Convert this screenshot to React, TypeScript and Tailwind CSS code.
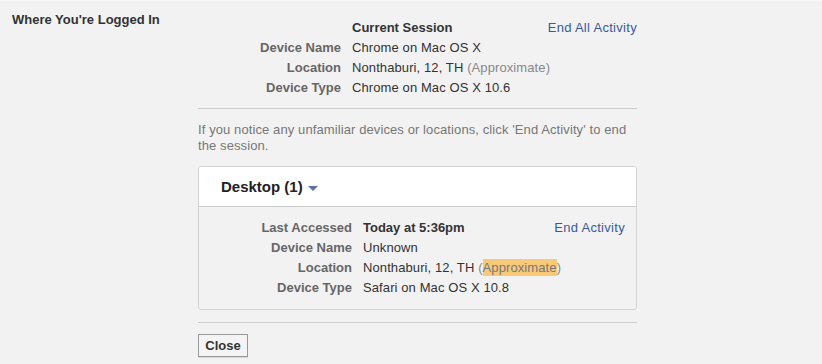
const font = "font-['Helvetica_Neue','Liberation_Sans',Arial,sans-serif]";

type Row = { label: string; value: React.ReactNode };

const Rows = ({ rows, labelW }: { rows: Row[]; labelW: string }) => (
  <div className="flex flex-col">
    {rows.map((r) => (
      <div key={r.label} className="flex h-5 items-center whitespace-nowrap">
        <span className={`${labelW} shrink-0 text-right font-bold tracking-normal text-[#666]`}>{r.label}</span>
        <span className="ml-[11px] text-[#333]">{r.value}</span>
      </div>
    ))}
  </div>
);

export default function App() {
  return (
    <div className={`${font} h-[364px] w-[822px] border-t border-[#f8f8f8] bg-[#f2f2f2] text-[13px] leading-4 tracking-[0.1px] text-[#333]`}>
      <div className="flex">
        <div className="w-[198px] shrink-0 pl-3 pt-[11px] font-bold tracking-normal">Where You're Logged In</div>

        <div className="flex w-[439px] flex-col">
          {/* current session */}
          <div className="flex pt-[17px]">
            <div className="min-w-0 flex-1">
              <div className="flex h-5 items-center">
                <span className="w-[143px] shrink-0" />
                <span className="ml-[11px] font-bold tracking-normal">Current Session</span>
              </div>
              <Rows
                labelW="w-[143px]"
                rows={[
                  { label: "Device Name", value: "Chrome on Mac OS X" },
                  {
                    label: "Location",
                    value: (
                      <>
                        Nonthaburi, 12, TH <span className="text-[#888]">(Approximate)</span>
                      </>
                    ),
                  },
                  { label: "Device Type", value: "Chrome on Mac OS X 10.6" },
                ]}
              />
            </div>
            <a className="flex h-5 shrink-0 items-center whitespace-nowrap tracking-[0.3px] text-[#3b5998]">
              End All Activity
            </a>
          </div>

          <div className="mt-[10px] border-t border-[#ccc]" />

          <p className="mt-[13px] tracking-[0.1px] text-[#777]">
            If you notice any unfamiliar devices or locations, click 'End Activity' to end the session.
          </p>

          {/* desktop box */}
          <div className="mt-[12px] overflow-hidden rounded-[3px] border border-[#d3d3d3]">
            <div className="flex h-[40px] items-center border-b border-[#ccc] bg-white pl-[22px]">
              <span className="text-[15px] font-bold tracking-normal text-[#222]">Desktop (1)</span>
              <svg width="10" height="5" viewBox="0 0 10 5" className="ml-[5px] mt-[3px]">
                <path d="M0 0h10L5 5z" fill="#5b74a8" />
              </svg>
            </div>
            <div className="flex pb-[11px] pl-[12px] pr-[11px] pt-[11px]">
              <div className="min-w-0 flex-1">
                <Rows
                  labelW="w-[141px]"
                  rows={[
                    {
                      label: "Last Accessed",
                      value: <span className="font-bold tracking-normal">Today at 5:36pm</span>,
                    },
                    { label: "Device Name", value: "Unknown" },
                    {
                      label: "Location",
                      value: (
                        <>
                          Nonthaburi, 12, TH <span className="text-[#888]">(</span>
                          <span className="bg-[#f8c979] py-[1px] text-[#777]">Approximate</span>
                          <span className="text-[#888]">)</span>
                        </>
                      ),
                    },
                    { label: "Device Type", value: "Safari on Mac OS X 10.8" },
                  ]}
                />
              </div>
              <a className="flex h-5 shrink-0 items-center whitespace-nowrap tracking-[0.3px] text-[#3b5998]">
                End Activity
              </a>
            </div>
          </div>

          <div className="mt-3 border-t border-[#ccc]" />

          <div className="mt-[11px]">
            <button className="h-[23px] w-[50px] border border-[#999] bg-[#f4f4f4] font-bold tracking-normal text-[#333] shadow-[0_1px_0_rgba(0,0,0,0.1)]">
              Close
            </button>
          </div>
        </div>
      </div>
    </div>
  );
}
